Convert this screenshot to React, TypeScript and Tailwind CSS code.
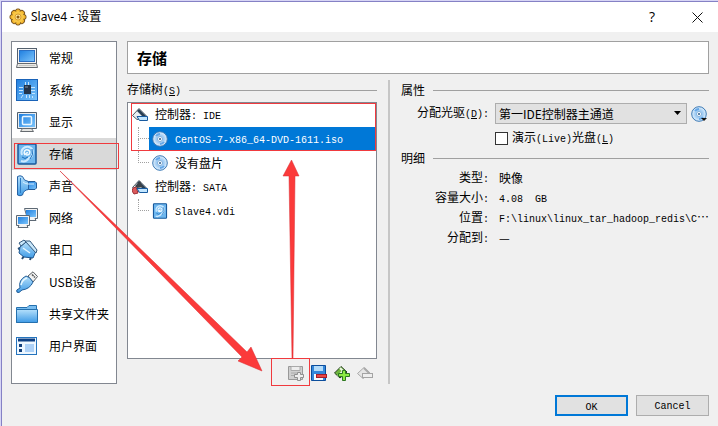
import type { ReactNode } from "react";

type IconProps = { className?: string };

function Defs() {
  return (
    <svg width="0" height="0" className="absolute" aria-hidden="true">
      <defs>
        <linearGradient id="blue" x1="0" y1="0" x2="1" y2="1">
          <stop offset="0" stopColor="#1f7fe0" />
          <stop offset="1" stopColor="#7cc4fa" />
        </linearGradient>
        <linearGradient id="sky" x1="0" y1="0" x2="0" y2="1">
          <stop offset="0" stopColor="#b5e0fb" />
          <stop offset="1" stopColor="#3f9be6" />
        </linearGradient>
        <radialGradient id="disc">
          <stop offset="0" stopColor="#ffffff" />
          <stop offset="0.5" stopColor="#9fcbf3" />
          <stop offset="1" stopColor="#e6f3fd" />
        </radialGradient>
      </defs>
    </svg>
  );
}

/* ── Sidebar icons ── */
function GeneralIcon() {
  return (
    <svg width="22" height="22" viewBox="0 0 22 22">
      <rect x="1.5" y="1.5" width="19" height="15" fill="#f4f4f4" stroke="#54606e" />
      <rect x="3.5" y="3.5" width="15" height="11" fill="url(#blue)" stroke="#2a6fc4" />
      <path d="M1.500 16.500H20.500L21.500 20.500H.500Z" fill="#e9e9e6" stroke="#666b70" />
      <path d="M3 18.500H19" stroke="#c5c5c0" />
    </svg>
  );
}

function SystemIcon() {
  return (
    <svg width="22" height="22" viewBox="0 0 22 22">
      <rect x=".5" y=".5" width="21" height="21" fill="url(#blue)" stroke="#1a63b8" />
      <path d="M3 8.500H7M3 11.500H7M3 14.500H6M15 8.500H19M15 11.500H19M16 14.500H19M9.500 3V6M12.500 3V6M5 19L7 16M10.500 16V19M13.500 16V19M16.500 17V19" stroke="#c5e6ff" />
      <rect x="8" y="6" width="7" height="9" fill="#24354b" />
      <path d="M9 8H12" stroke="#8292a5" />
    </svg>
  );
}

function DisplayIcon() {
  return (
    <svg width="22" height="22" viewBox="0 0 22 22">
      <path d="M1.500 1.500H20.500V17.500H1.500Z" fill="#e9edf1" stroke="#50606f" />
      <rect x="3" y="3" width="16" height="13" fill="url(#blue)" />
      <rect x="6.500" y="5.500" width="9" height="8" rx="1" fill="none" stroke="#eaf7ff" strokeWidth="1.500" />
      <path d="M6.500 17.500H15.500L17.500 20.500H4.500Z" fill="#e5e5e2" stroke="#666b70" />
    </svg>
  );
}

function DiskIcon({ className = "size-[22px]" }: IconProps) {
  return (
    <svg className={className} viewBox="0 0 22 22">
      <rect x="2" y="1" width="18" height="20" rx="1" fill="#6db6ee" stroke="#17599c" strokeWidth="1.500" />
      <path d="M6 12C4 7 8 3 13 4C19 6 17 14 13 15C11 18 8 19 5 18" fill="none" stroke="#cdeaff" strokeWidth="2" />
      <path d="M9 12C7 9 9 6 12 7C15 8 14 12 11 12C9 12 10 9 12 10" fill="none" stroke="#f2fbff" strokeWidth="1.500" />
      <path d="M16 6Q18 12 14 16M6 14Q9 17 12 14" fill="none" stroke="#1b6ebc" />
    </svg>
  );
}

function AudioIcon() {
  return (
    <svg width="22" height="22" viewBox="0 0 22 22">
      <path d="M11 6.500H19L20.500 8V13L19 14.500H11Z" fill="url(#blue)" stroke="#245c98" />
      <path d="M1.500 1.500Q4 0 6.500 1.500Q7.500 6 12.500 6.500V14.500Q7.500 15 6.500 20Q4 21.500 1.500 20Z" fill="url(#sky)" stroke="#2763a5" />
      <path d="M4.500 3V18" stroke="#2c7bc5" />
      <path d="M7 7Q9 9 12 9H18" fill="none" stroke="#d8f0ff" />
    </svg>
  );
}

function NetworkIcon() {
  return (
    <svg width="22" height="22" viewBox="0 0 22 22">
      <path d="M8.500 1.500H21.500V11.500H19L20 13.500H12Z" fill="#f3f3f3" stroke="#5d6975" />
      <rect x="10" y="3" width="10" height="7" fill="url(#blue)" />
      <path d="M.500 8.500H13.500V18.500H11L12 20.500H2L3 18.500H.500Z" fill="#f3f3f3" stroke="#5d6975" />
      <rect x="2" y="10" width="10" height="7" fill="url(#blue)" />
    </svg>
  );
}

function SerialIcon() {
  return (
    <svg width="22" height="22" viewBox="0 0 22 22">
      <path d="M2 10L6 8M6 20L8 17M14 21L15 18" stroke="#284d72" strokeWidth="2" />
      <path d="M4 8L10 3L20 12L17 19L8 18L3 14Z" fill="url(#sky)" stroke="#1e5790" />
      <path d="M3 4L8 1L10 3L5 7Z" fill="#cae8fb" stroke="#335a7e" />
      <path d="M9 2H14L21 11L20 14Z" fill="#cae8fb" stroke="#335a7e" />
      <path d="M7 9L14 14" stroke="#e4f6ff" strokeWidth="1.500" />
    </svg>
  );
}

function UsbIcon() {
  return (
    <svg width="22" height="22" viewBox="0 0 22 22">
      <path d="M12 5L17 .800L21.500 5.500L17 11Z" fill="#f0f1f1" stroke="#5b6064" />
      <path d="M16 3.500L17.500 5M18 5.500L19 6.500" stroke="#555" strokeWidth="1.500" />
      <path d="M4 17Q2 9 10 5Q13 5 17 11Q14 18 6 19L3 21.500Q0 22 .800 19Z" fill="url(#sky)" stroke="#235f99" />
      <path d="M5 14Q6 9 11 7" fill="none" stroke="#e8f8ff" strokeWidth="1.500" />
    </svg>
  );
}

function FolderIcon() {
  return (
    <svg width="22" height="22" viewBox="0 0 22 22">
      <path d="M.500 19.500V4.500H11L13 2.500H20.500V19.500Z" fill="#79bdf0" stroke="#2470ae" />
      <path d="M.500 19.500V6.500H21.500V19.500Z" fill="url(#sky)" stroke="#2470ae" />
    </svg>
  );
}

function InterfaceIcon() {
  return (
    <svg width="22" height="22" viewBox="0 0 22 22">
      <rect x=".500" y="2.500" width="20" height="17" fill="#eef7ff" stroke="#2473bd" />
      <path d="M2 5H19" stroke="#0d3f83" strokeWidth="3" />
      <path d="M3 9H6V12H3ZM3 14H6V17H3Z" fill="#123f7b" />
      <rect x="9" y="9" width="9" height="8" fill="#add1f7" />
    </svg>
  );
}

function GearIcon() {
  return (
    <svg width="18" height="18" viewBox="0 0 18 18">
      <g fill="#f3b52c" stroke="#76501a">
        {[0, 45, 90, 135, 180, 225, 270, 315].map((angle) => (
          <rect key={angle} x="6.500" y="1" width="5" height="6" rx="2" transform={`rotate(${angle} 9 9)`} />
        ))}
      </g>
      <circle cx="9" cy="9" r="6" fill="#f8c746" />
      <circle cx="9" cy="9" r="3" fill="#ffe79a" stroke="#d89c30" />
      <circle cx="9" cy="9" r="1.500" fill="#8a5b13" />
    </svg>
  );
}

/* ── 16px icons ── */
function ControllerIcon({ sata = false }: { sata?: boolean }) {
  return (
    <svg width="16" height="16" viewBox="0 0 16 16">
      <path d="M.500 8.500L7 1.500L14.500 9L12 11.500L5 12.500Z" fill="#e9eef2" stroke="#4b555e" />
      <path d="M7 2L14 9H10L5 4Z" fill="#293f54" />
      {sata && <path d="M3 7L8 2L11 8L5 9Z" fill="#3c4248" />}
      {sata && <path d="M1 9L4 8L6 14L2 15L0 12Z" fill="#dc5a5c" stroke="#9d3137" />}
      <path d="M5 9.500H15.500V13.500H7.500Z" fill="#c2e6ff" stroke="#175a9f" />
    </svg>
  );
}

function DiscIcon({ menu = false }: { menu?: boolean }) {
  return (
    <svg width="16" height="16" viewBox="0 0 16 16" className="shrink-0">
      <circle cx="8" cy="8" r="7.300" fill="url(#disc)" stroke="#3978b5" />
      <path d="M4 5A5 5 0 0 1 8 3M12 11A5 5 0 0 1 8 13" fill="none" stroke="#64a7e8" strokeWidth="2" />
      <circle cx="8" cy="8" r="2.500" fill="#fff" stroke="#7caedb" />
      <circle cx="8" cy="8" r="1" fill="#285987" />
      {menu && <path d="M10 12H16L13 15Z" fill="#111" />}
    </svg>
  );
}

function AddAttachmentIcon() {
  return (
    <svg width="16" height="16" viewBox="0 0 16 16">
      <path d="M.500 1.500H14.500V14.500H.500Z" fill="#cfcfcf" stroke="#999" />
      <path d="M3 1.500H12V5.500H3ZM3 8H9M3 10.500H8" fill="#eee" stroke="#aaa" />
      <path d="M9.500 7.500H12.500V9.500H15.500V12.500H12.500V15.500H9.500V12.500H6.500V9.500H9.500Z" fill="#eee" stroke="#909090" />
    </svg>
  );
}

function RemoveAttachmentIcon() {
  return (
    <svg width="16" height="16" viewBox="0 0 16 16">
      <path d="M.500 .500H14.500V15.500H.500Z" fill="#3487da" stroke="#0b4d9c" />
      <path d="M3 1H12V6H3Z" fill="#b4dcfa" />
      <path d="M3 9H12V15H3Z" fill="#f3faff" />
      <rect x="5.500" y="9.500" width="10" height="3" fill="#e94645" stroke="#a51e2a" />
    </svg>
  );
}

function AddControllerIcon() {
  return (
    <svg width="16" height="16" viewBox="0 0 16 16">
      <path d="M.500 8L7 1.500L13 7L6 13Z" fill="#70b63e" stroke="#243c20" />
      <path d="M6 3L9 6L4 11" stroke="#eaf7df" strokeWidth="2" fill="none" />
      <path d="M8.500 5.500H11.500V8.500H15.500V11.500H11.500V15.500H8.500V11.500H4.500V8.500H8.500Z" fill="#8bea42" stroke="#2c7721" />
    </svg>
  );
}

function RemoveControllerIcon() {
  return (
    <svg width="16" height="16" viewBox="0 0 16 16">
      <path d="M.500 8.500L7 2.500L13.500 8.500L6 13.500Z" fill="#e5e5e5" stroke="#aaa" />
      <path d="M7 3L12 8" stroke="#aaa" strokeWidth="2" />
      <rect x="5.500" y="8.500" width="10" height="4" fill="#eee" stroke="#a4a4a4" />
    </svg>
  );
}

/* Half-width characters, 6px each */
function Half({ children }: { children: ReactNode }) {
  return <span className="font-['Liberation_Mono',monospace] text-[10px] whitespace-pre">{children}</span>;
}

function GroupTitle({ children }: { children: ReactNode }) {
  return (
    <div className="flex h-5 items-center gap-2">
      <h2 className="shrink-0">{children}</h2>
      <span className="h-px flex-1 bg-[#a0a0a0]" />
    </div>
  );
}

const pages = [
  { name: "常规", icon: <GeneralIcon /> },
  { name: "系统", icon: <SystemIcon /> },
  { name: "显示", icon: <DisplayIcon /> },
  { name: "存储", icon: <DiskIcon />, selected: true },
  { name: "声音", icon: <AudioIcon /> },
  { name: "网络", icon: <NetworkIcon /> },
  { name: "串口", icon: <SerialIcon /> },
  { name: "USB设备", icon: <UsbIcon /> },
  { name: "共享文件夹", icon: <FolderIcon /> },
  { name: "用户界面", icon: <InterfaceIcon /> },
];

function Sidebar() {
  return (
    <nav className="w-[106px] shrink-0 border border-[#828790] bg-white">
      {pages.map((page) => (
        <button
          key={page.name}
          type="button"
          className={`flex h-8 w-full items-center gap-[11px] pl-1 text-left ${page.selected ? "bg-[#d9d9d9]" : ""}`}
        >
          {page.icon}
          <span>{page.name}</span>
        </button>
      ))}
    </nav>
  );
}

function ControllerRow({ name, sata }: { name: string; sata?: boolean }) {
  return (
    <div className="flex h-6 items-center gap-[7px] pl-1">
      <ControllerIcon sata={sata} />
      <span>
        控制器<Half>: {name}</Half>
      </span>
    </div>
  );
}

type AttachmentProps = { icon: ReactNode; children: ReactNode; last?: boolean; selected?: boolean };

function AttachmentRow({ icon, children, last, selected }: AttachmentProps) {
  return (
    <div className="flex h-6">
      <div className="w-[21px] shrink-0 pl-[10px]">
        <div className="h-3 border-b border-l border-dotted border-[#a0a0a0]" />
        {!last && <div className="h-3 border-l border-dotted border-[#a0a0a0]" />}
      </div>
      <div className={`flex flex-1 items-center gap-[7px] pl-[3px] ${selected ? "bg-[#0078d7] text-white" : ""}`}>
        {icon}
        <span>{children}</span>
      </div>
    </div>
  );
}

function StorageTree() {
  return (
    <section className="flex w-[250px] shrink-0 flex-col">
      <GroupTitle>
        存储树<Half>(<u>S</u>)</Half>
      </GroupTitle>
      <div className="mt-[2px] flex-1 border border-[#828790] bg-white">
        <ControllerRow name="IDE" />
        <AttachmentRow icon={<DiscIcon />} selected>
          <Half>CentOS-7-x86_64-DVD-1611.iso</Half>
        </AttachmentRow>
        <AttachmentRow icon={<DiscIcon />} last>
          没有盘片
        </AttachmentRow>
        <ControllerRow name="SATA" sata />
        <AttachmentRow icon={<DiskIcon className="size-4" />} last>
          <Half>Slave4.vdi</Half>
        </AttachmentRow>
      </div>
      <div className="flex h-[25px] items-end justify-end gap-[7px] pr-1 pb-[3px]">
        <button type="button" aria-label="添加虚拟介质" disabled><AddAttachmentIcon /></button>
        <button type="button" aria-label="删除虚拟介质"><RemoveAttachmentIcon /></button>
        <button type="button" aria-label="添加控制器"><AddControllerIcon /></button>
        <button type="button" aria-label="删除控制器" disabled><RemoveControllerIcon /></button>
      </div>
    </section>
  );
}

function Detail({ label, children }: { label: string; children: ReactNode }) {
  return (
    <div className="flex h-5 items-center gap-[10px]">
      <dt className="w-[88px] shrink-0 text-right">
        {label}<Half>:</Half>
      </dt>
      <dd className="whitespace-nowrap">{children}</dd>
    </div>
  );
}

function Attributes() {
  return (
    <section className="min-w-0 flex-1">
      <GroupTitle>属性</GroupTitle>
      <div className="mt-[3px] flex items-center">
        <label htmlFor="drive" className="w-[88px] shrink-0 text-right">
          分配光驱<Half>(<u>D</u>):</Half>
        </label>
        <div className="relative ml-[6px] flex-1">
          <select
            id="drive"
            className="block h-[21px] w-full appearance-none border border-[#adadad] bg-[#e1e1e1] pl-[3px] leading-4"
          >
            <option>第一IDE控制器主通道</option>
          </select>
          <svg width="7" height="4" viewBox="0 0 7 4" className="pointer-events-none absolute top-2 right-[6px]">
            <path d="M0 0H7L3.500 4Z" />
          </svg>
        </div>
        <button type="button" aria-label="选择虚拟光盘" className="mr-[2px] ml-1">
          <DiscIcon menu />
        </button>
      </div>
      <div className="ml-[94px] flex h-7 items-center">
        <input id="live" type="checkbox" className="mr-1 size-[13px] appearance-none border border-[#333] bg-white" />
        <label htmlFor="live">
          演示<Half>(Live)</Half>光盘<Half>(<u>L</u>)</Half>
        </label>
      </div>
      <div className="-mt-1">
        <GroupTitle>明细</GroupTitle>
      </div>
      <dl>
        <Detail label="类型">映像</Detail>
        <Detail label="容量大小"><Half>4.08  GB</Half></Detail>
        <Detail label="位置"><Half>F:\linux\linux_tar_hadoop_redis\C</Half>…</Detail>
        <Detail label="分配到">—</Detail>
      </dl>
    </section>
  );
}

/* Red boxes and arrows drawn over the dialog */
function Annotations() {
  return (
    <svg width="400" height="400" viewBox="0 0 400 400" className="pointer-events-none absolute top-0 left-0">
      <g fill="none" stroke="#f03a3e">
        <rect x="14.500" y="143.500" width="104" height="25" />
        <rect x="131.500" y="103.500" width="244" height="47" />
        <rect x="271.500" y="358.500" width="38" height="27" />
      </g>
      <g fill="#fb3a3a" stroke="#d92f35" strokeWidth=".500">
        <path d="M60 171L247 352L251 347L262 371L238 361L242 357Z" />
        <path d="M292 358L289 176H283L291.500 160L299 176H295L293 358Z" />
      </g>
    </svg>
  );
}

export default function App() {
  return (
    <div
      lang="zh-CN"
      className="relative flex min-h-screen bg-[#d7d5f5] pt-px pl-px font-['Noto_Sans_CJK_SC',sans-serif] text-xs leading-4 text-black"
    >
      <Defs />
      <div className="flex flex-1 flex-col border-t border-l border-[#8581c5] bg-[#f0f0f0]">
        <header className="flex h-[30px] items-center bg-white pr-4 pl-[7px]">
          <GearIcon />
          <h1 className="ml-1 flex-1 font-['Noto_Sans','Noto_Sans_CJK_SC',sans-serif]">Slave4 - 设置</h1>
          <button type="button" className="w-4 font-['Open_Sans',sans-serif] text-sm">?</button>
          <button type="button" aria-label="关闭" className="ml-8">
            <svg width="11" height="11" viewBox="0 0 11 11">
              <path d="M.500 .500L10.500 10.500M10.500 .500L.500 10.500" stroke="#111" />
            </svg>
          </button>
        </header>

        <main className="flex flex-1 gap-[10px] px-[9px] pt-[9px]">
          <Sidebar />
          <div className="flex min-w-0 flex-1 flex-col pr-px">
            <div className="mb-[6px] flex h-[33px] items-center border border-[#a0a0a0] bg-white pl-[9px]">
              <strong className="text-[15px] font-bold">存储</strong>
            </div>
            <div className="flex flex-1">
              <StorageTree />
              <div className="mx-[11px] w-[2px] shrink-0 bg-[#c6c6c6]" />
              <Attributes />
            </div>
          </div>
        </main>

        <footer className="flex justify-end gap-2 px-[10px] pt-[11px] pb-[10px]">
          <button type="button" className="h-[21px] w-[73px] border-2 border-[#0078d7] bg-[#e1e1e1] leading-4">
            <Half>OK</Half>
          </button>
          <button type="button" className="h-[21px] w-[73px] border border-[#adadad] bg-[#e1e1e1] leading-4">
            <Half>Cancel</Half>
          </button>
        </footer>
      </div>
      <Annotations />
    </div>
  );
}
